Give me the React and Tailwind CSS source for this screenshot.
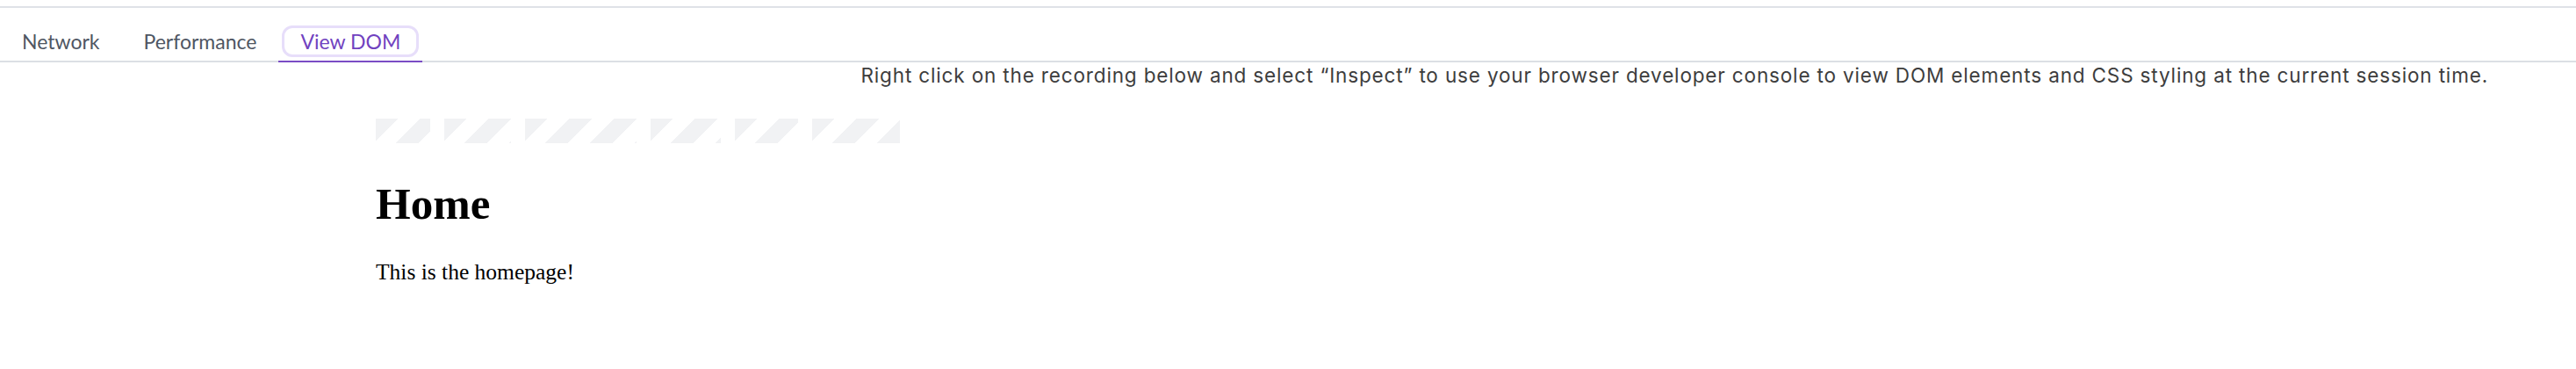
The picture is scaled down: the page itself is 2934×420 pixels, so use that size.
import React from "react";

const tabs = [
  { label: "Network", active: false },
  { label: "Performance", active: false },
  { label: "View DOM", active: true },
];

const blocks = [62, 76, 127, 80, 72, 100];

export default function App() {
  return (
    <div className="w-[2934px] h-[420px] bg-white overflow-hidden font-['Lato',sans-serif]">
      <div className="mt-[7px] h-[2px] bg-[#dfe2e7]" />
      <div className="flex border-b-2 border-[#dcdfe4] pt-[20px]">
        {tabs.map((t) => (
          <div
            key={t.label}
            className={
              t.active
                ? "px-[4px] pb-[4px] -mb-[2px] border-b-2 border-[#7a4cc5]"
                : "px-[4px] pb-[4px] -mb-[2px] border-b-2 border-transparent"
            }
          >
            <div
              className={
                t.active
                  ? "border-[3px] border-[#e7defa] rounded-[12px] px-[18px] h-[36px] flex items-center text-[23px] leading-[30px] text-[#7142c0]"
                  : "border-[3px] border-transparent rounded-[12px] px-[18px] h-[36px] flex items-center text-[23px] leading-[30px] text-[#4f5663]"
              }
            >
              {t.label}
            </div>
          </div>
        ))}
      </div>
      <div className="flex justify-end pr-[100px]">
        <p className="font-['Inter',sans-serif] text-[22.5px] tracking-[0.85px] leading-[30px] text-[#3d3d3d] whitespace-nowrap">
          Right click on the recording below and select “Inspect” to use your browser developer console to view DOM elements and CSS styling at the current session time.
        </p>
      </div>
      <div className="pl-[428px]">
        <div className="flex gap-[16px] mt-[34px] h-[28px]">
          {blocks.map((w, i) => (
            <div
              key={i}
              className="h-[28px] bg-[repeating-linear-gradient(135deg,#f1f2f4_0_18px,#ffffff_18px_36px)]"
              style={{ width: w }}
            />
          ))}
        </div>
        <h1 className="mt-[44px] font-['Liberation_Serif',serif] font-bold text-[51px] leading-none text-black">
          Home
        </h1>
        <p className="mt-[39px] font-['Liberation_Serif',serif] text-[25.5px] leading-none text-black">
          This is the homepage!
        </p>
      </div>
    </div>
  );
}
